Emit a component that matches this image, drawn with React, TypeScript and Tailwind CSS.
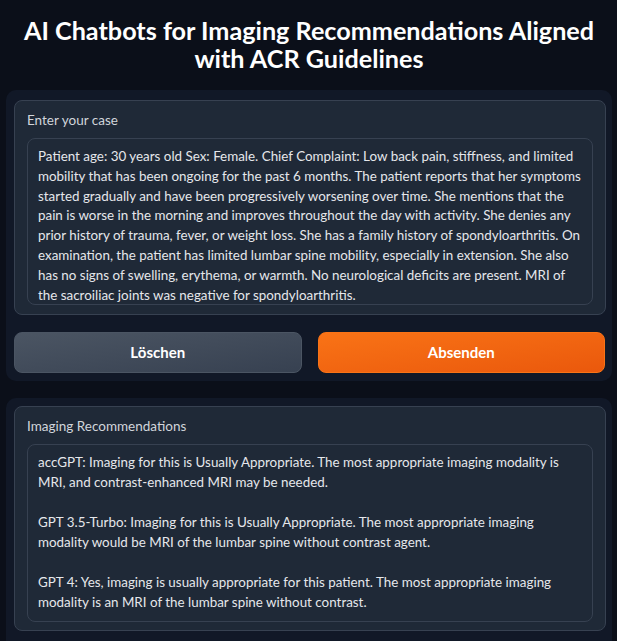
const caseLines = [
  'Patient age: 30 years old Sex: Female. Chief Complaint: Low back pain, stiffness, and limited',
  'mobility that has been ongoing for the past 6 months. The patient reports that her symptoms',
  'started gradually and have been progressively worsening over time. She mentions that the',
  'pain is worse in the morning and improves throughout the day with activity. She denies any',
  'prior history of trauma, fever, or weight loss. She has a family history of spondyloarthritis. On',
  'examination, the patient has limited lumbar spine mobility, especially in extension. She also',
  'has no signs of swelling, erythema, or warmth. No neurological deficits are present. MRI of',
  'the sacroiliac joints was negative for spondyloarthritis.',
];

const recommendations = [
  [
    'accGPT: Imaging for this is Usually Appropriate. The most appropriate imaging modality is',
    'MRI, and contrast-enhanced MRI may be needed.',
  ],
  [
    'GPT 3.5-Turbo: Imaging for this is Usually Appropriate. The most appropriate imaging',
    'modality would be MRI of the lumbar spine without contrast agent.',
  ],
  [
    'GPT 4: Yes, imaging is usually appropriate for this patient. The most appropriate imaging',
    'modality is an MRI of the lumbar spine without contrast.',
  ],
];

function Lines({ lines }: { lines: string[] }) {
  return (
    <>
      {lines.map(line => (
        <div key={line} className="whitespace-nowrap">
          {line}
        </div>
      ))}
    </>
  );
}

export default function App() {
  return (
    <div className="h-[641px] overflow-hidden bg-[#0b0f19] pl-[6px] pr-[5px] font-['Lato',sans-serif] text-[#e5e7eb]">
      {/* Title */}
      <h1 className="pt-4 text-center text-[25.2px] font-bold leading-[28px] text-white">
        AI Chatbots for Imaging Recommendations Aligned
        <br />
        with ACR Guidelines
      </h1>

      {/* Case input */}
      <div className="mt-[18px] rounded-[10px] bg-[#111827] pl-2 pr-[6px] pt-[10px] pb-2">
        <div className="rounded-lg border border-[#374151] bg-[#1f2937] px-3 pt-[9px] pb-[9px]">
          <div className="text-[13.5px] leading-5 text-[#d1d5db]">Enter your case</div>
          <div className="mt-2 h-[167px] overflow-hidden rounded-lg border border-[#374151] bg-[#1f2937] px-[10px] pt-2 text-[13.4px] leading-[19.8px]">
            <Lines lines={caseLines} />
          </div>
        </div>

        <div className="mt-[17px] flex gap-4 pr-px">
          <button className="h-[41px] flex-1 rounded-lg border border-[#4b5563] bg-gradient-to-br from-[#4b5563] to-[#374151] text-[15px] font-bold text-white">
            Löschen
          </button>
          <button className="h-[41px] flex-1 rounded-lg border border-[#f97316] bg-gradient-to-br from-[#f97316] to-[#ea580c] text-[15px] font-bold text-white">
            Absenden
          </button>
        </div>
      </div>

      {/* Results */}
      <div className="mt-[17px] rounded-[10px] bg-[#111827] pl-2 pr-[6px] pt-2 pb-6">
        <div className="rounded-lg border border-[#374151] bg-[#1f2937] px-3 pt-[9px] pb-[8px]">
          <div className="text-[13.5px] leading-5 text-[#d1d5db]">Imaging Recommendations</div>
          <div className="mt-2 rounded-lg border border-[#374151] bg-[#1f2937] px-[10px] pt-[7px] pb-[9px] text-[13.4px] leading-5">
            {recommendations.map((rec, i) => (
              <div key={i} className={i > 0 ? 'mt-5' : ''}>
                <Lines lines={rec} />
              </div>
            ))}
          </div>
        </div>
      </div>
    </div>
  );
}
